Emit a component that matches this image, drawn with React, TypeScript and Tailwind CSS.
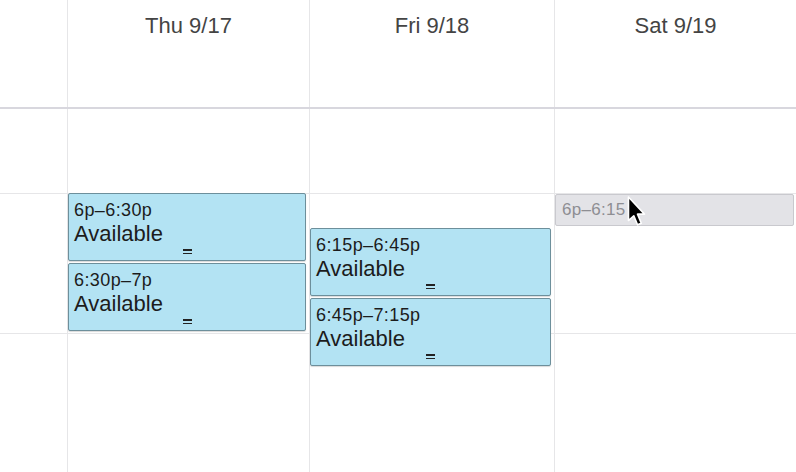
import React from "react";

type Slot = { top: number; height: number; time: string; ghost?: boolean };

const days: { label: string; events: Slot[] }[] = [
  {
    label: "Thu 9/17",
    events: [
      { top: 84, height: 68, time: "6p–6:30p" },
      { top: 154, height: 68, time: "6:30p–7p" },
    ],
  },
  {
    label: "Fri 9/18",
    events: [
      { top: 119, height: 68, time: "6:15p–6:45p" },
      { top: 189, height: 68, time: "6:45p–7:15p" },
    ],
  },
  {
    label: "Sat 9/19",
    events: [{ top: 85, height: 32, time: "6p–6:15", ghost: true }],
  },
];

const cols = "grid grid-cols-[67px_242px_245px_1fr]";

function HourLines() {
  return (
    <div className="flex flex-col h-full">
      <div className="h-[84px] shrink-0" />
      <div className="h-[140px] shrink-0 border-t border-[#e6e6e8]" />
      <div className="flex-1 border-t border-[#e6e6e8]" />
    </div>
  );
}

function EventBox({ slot }: { slot: Slot }) {
  if (slot.ghost) {
    return (
      <div
        className="absolute left-0 right-[2px] rounded-[2px] border border-[#c9c9ce] bg-[#e3e3e7] px-[6px] pt-[5px] text-[17px] leading-[20px] tracking-[0.3px] text-[#8e8e93]"
        style={{ top: slot.top, height: slot.height }}
      >
        {slot.time}
      </div>
    );
  }
  return (
    <div
      className="absolute left-0 right-[3px] rounded-[2px] border border-[#6d8f9b] bg-[#b3e3f3] px-[5px] pt-[6px] text-[#1c1c1c] shadow-[0_1px_1px_rgba(0,0,0,0.15)]"
      style={{ top: slot.top, height: slot.height }}
    >
      <div className="text-[18px] leading-[20px] tracking-[0.4px]">{slot.time}</div>
      <div className="mt-px text-[22px] leading-[25px]">Available</div>
      <div className="absolute bottom-[6px] left-0 right-0 flex flex-col items-center gap-[2px]">
        <div className="w-[9px] h-[1.5px] bg-[#222]" />
        <div className="w-[9px] h-[1.5px] bg-[#222]" />
      </div>
    </div>
  );
}

function Cursor() {
  return (
    <svg
      className="absolute left-[626px] top-[196px]"
      width="22"
      height="32"
      viewBox="0 0 20 30"
    >
      <path
        d="M2 1 L2 23 L7 18.5 L10.5 27 L14 25.5 L10.5 17 L17 17 Z"
        fill="#000"
        stroke="#fff"
        strokeWidth="1.5"
        strokeLinejoin="round"
      />
    </svg>
  );
}

export default function App() {
  return (
    <div className="relative w-[796px] h-[472px] overflow-hidden bg-white font-['Liberation_Sans',Arial,sans-serif]">
      <div className={`${cols} h-[109px] border-b-2 border-[#d8d7de]`}>
        <div />
        {days.map((d) => (
          <div
            key={d.label}
            className="border-l border-[#e6e6e8] pt-[12px] text-center text-[22px] leading-[28px] text-[#444]"
          >
            {d.label}
          </div>
        ))}
      </div>
      <div className={`${cols} h-[363px]`}>
        <HourLines />
        {days.map((d) => (
          <div key={d.label} className="relative border-l border-[#e6e6e8]">
            <HourLines />
            {d.events.map((e) => (
              <EventBox key={e.time} slot={e} />
            ))}
          </div>
        ))}
      </div>
      <Cursor />
    </div>
  );
}
